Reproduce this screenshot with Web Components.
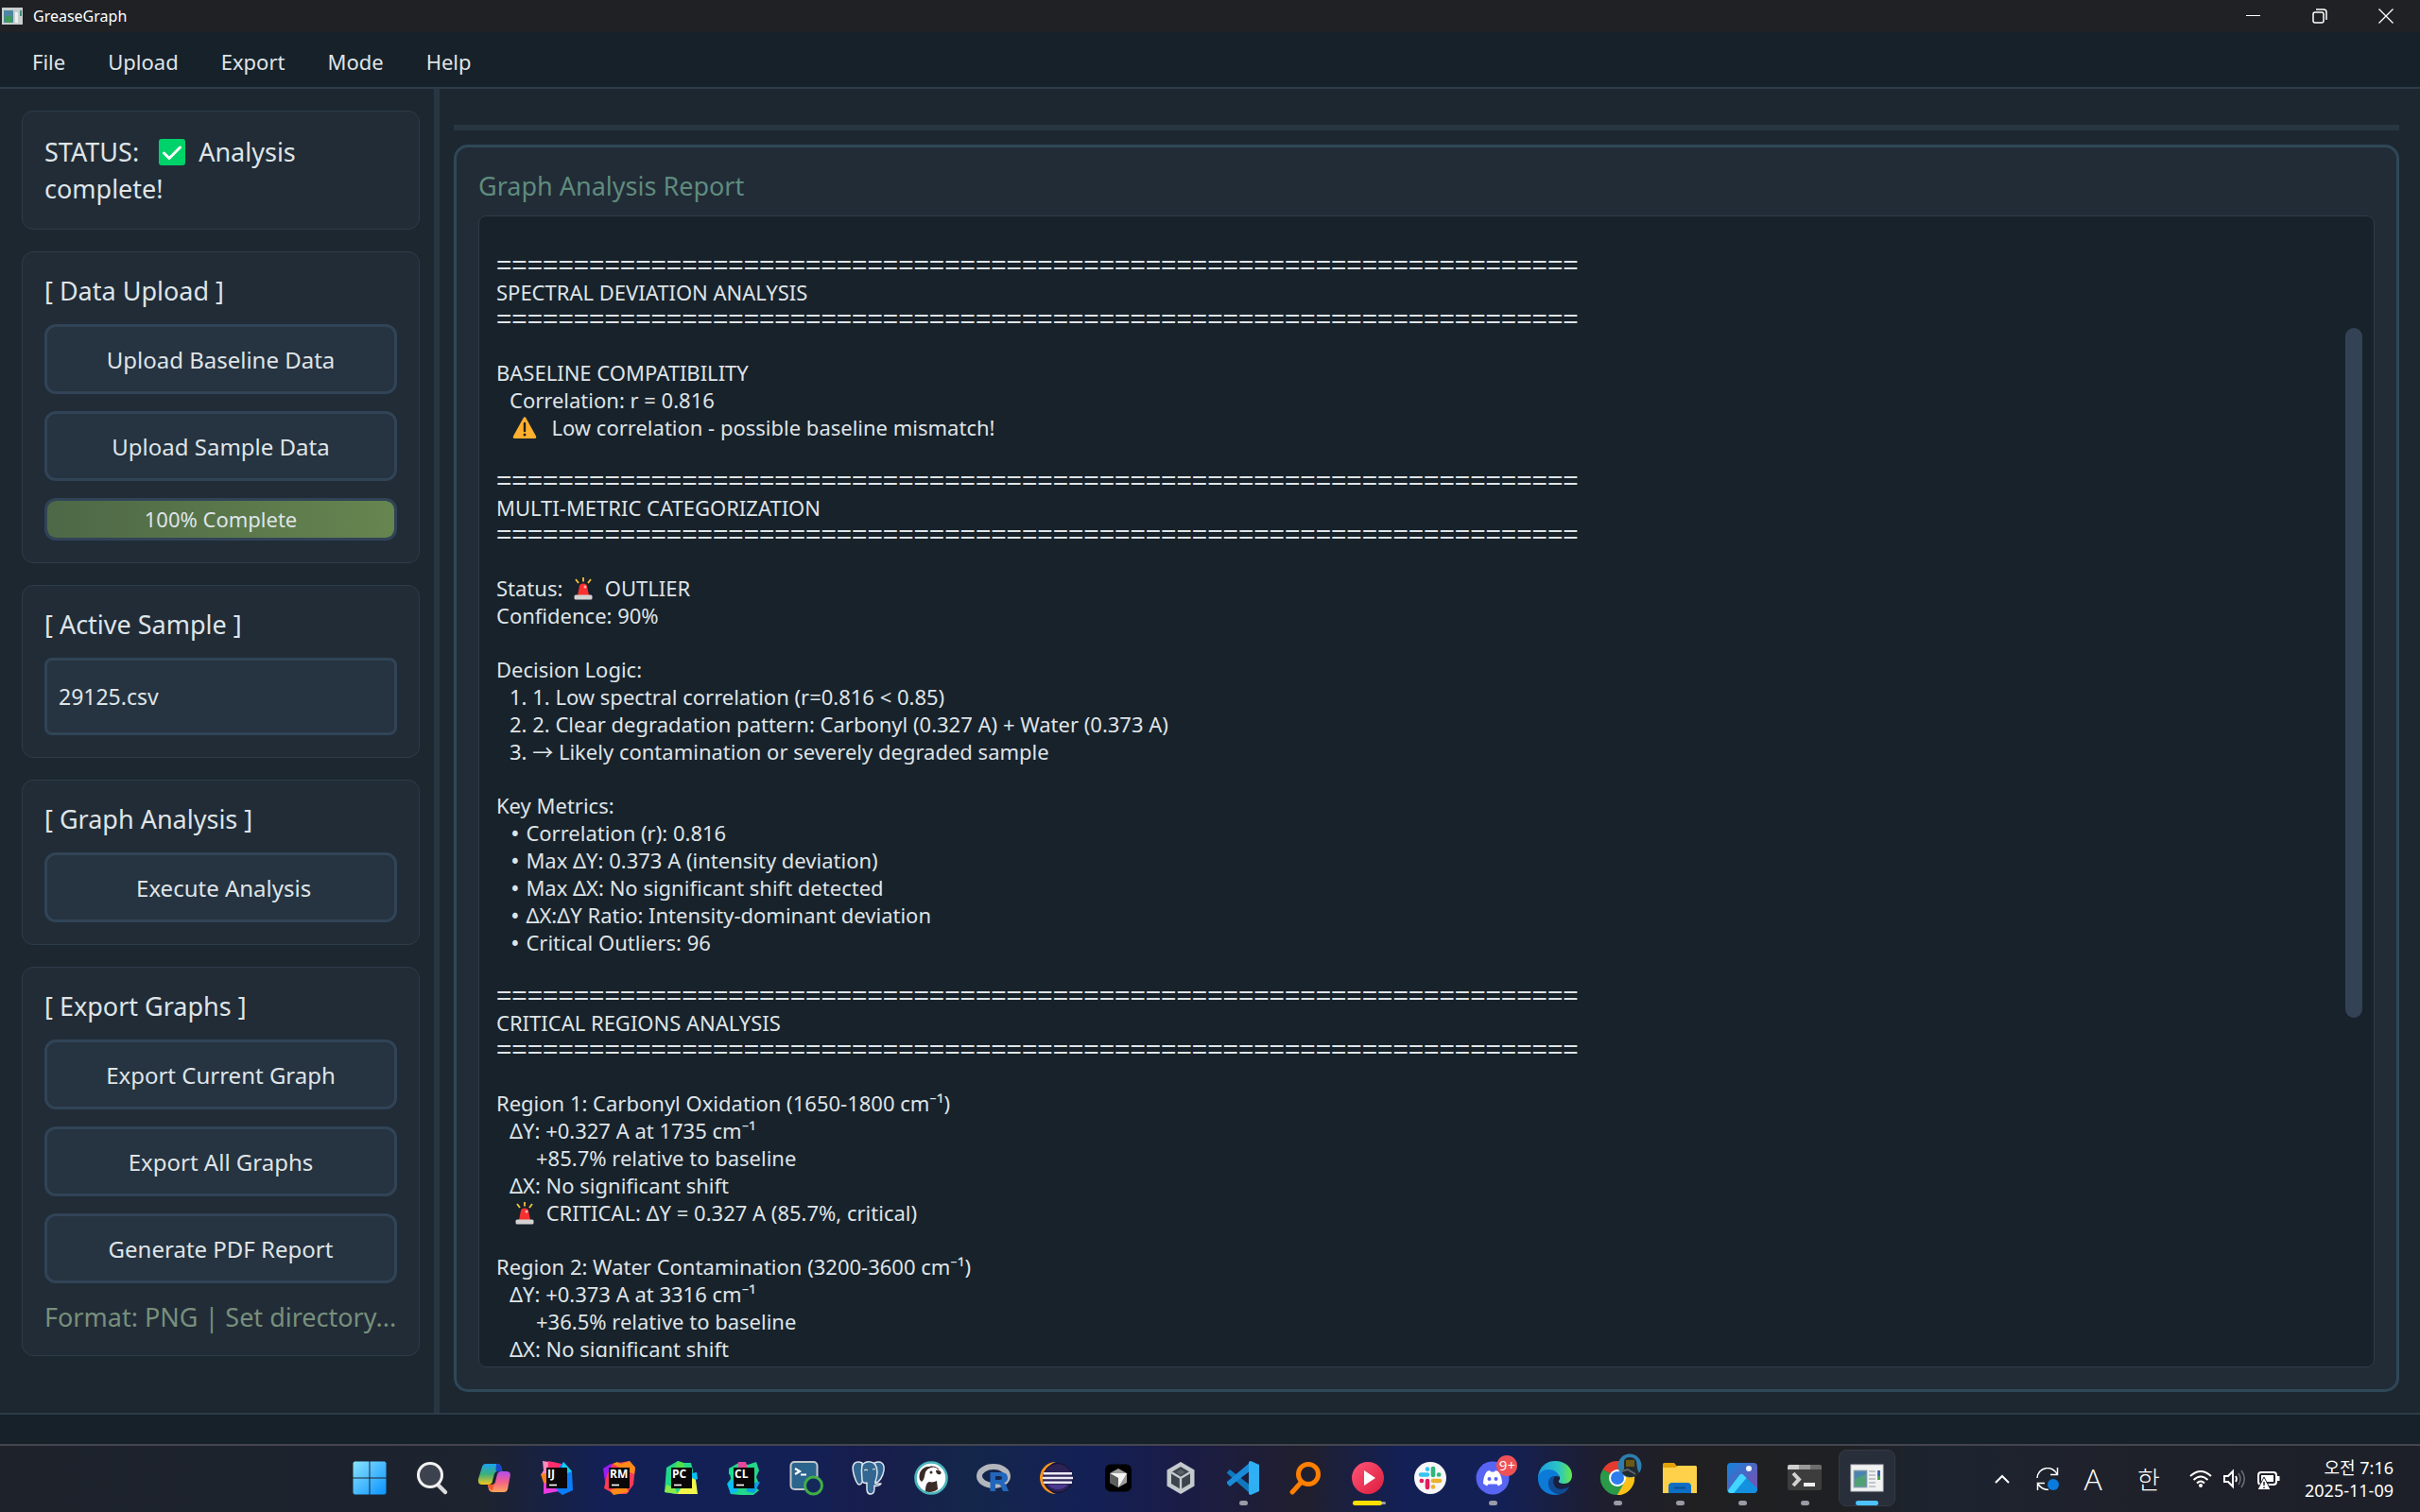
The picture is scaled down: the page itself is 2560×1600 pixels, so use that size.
<!DOCTYPE html>
<html lang="en">
<head>
<meta charset="utf-8">
<title>GreaseGraph</title>
<style>
html, body { height: 100%; margin: 0; }
body {
  font-family: "Noto Sans", "Open Sans", "Noto Sans CJK KR", sans-serif;
  font-size: 22px;
  color: #dfe4e7;
  background: #1d2730;
  --ink: #dfe4e7;
  --line: #2d3c49;
  --bar: #283642;
  --deep: #18222b;
  --card: #212c37;
  --control: #263340;
  --control-line: #314457;
}
</style>
</head>
<body>
<app-window>
  <title-bar slot="title">GreaseGraph</title-bar>
  <menu-bar slot="menu" items="File,Upload,Export,Mode,Help"></menu-bar>

  <side-card slot="side"><status-line state="Analysis complete!"></status-line></side-card>
  <side-card slot="side" heading="[ Data Upload ]">
    <action-button>Upload Baseline Data</action-button>
    <action-button>Upload Sample Data</action-button>
    <progress-strip value="100"></progress-strip>
  </side-card>
  <side-card slot="side" heading="[ Active Sample ]">
    <sample-field value="29125.csv"></sample-field>
  </side-card>
  <side-card slot="side" heading="[ Graph Analysis ]">
    <action-button>&nbsp;Execute Analysis</action-button>
  </side-card>
  <side-card slot="side" heading="[ Export Graphs ]">
    <action-button>Export Current Graph</action-button>
    <action-button>Export All Graphs</action-button>
    <action-button>Generate PDF Report</action-button>
    <format-note>Format: PNG | Set directory...</format-note>
  </side-card>

  <report-panel slot="main" heading="Graph Analysis Report"></report-panel>
</app-window>
<task-bar></task-bar>

<script>
// Small base class: every element renders one template into an open root
class Base extends HTMLElement {
  constructor() {
    super();
    this.attachShadow({ mode: "open" });
  }
  connectedCallback() {
    this.shadowRoot.innerHTML = `<style>:host,*{box-sizing:border-box}${this.css()}</style>${this.html()}`;
  }
  css() { return ""; }
  html() { return "<slot></slot>"; }
}

// -- Window frame --

class AppWindow extends Base {
  css() {
    return `
:host { display: flex; flex-direction: column; height: calc(100vh - 72px); }
.work { flex: 1; min-height: 0; display: flex; }
.side {
  flex: 0 0 459px; display: flex; flex-direction: column; gap: 23px;
  padding: 23px 15px 23px 23px; overflow: hidden;
}
.split { flex: 0 0 6px; background: var(--bar); }
main { flex: 1; min-width: 0; display: flex; flex-direction: column; gap: 15px; padding: 38px 22px 22px 15px; }
.rail { flex: 0 0 6px; background: var(--bar); }
footer { flex: 0 0 33px; background: #17212a; border-top: 2px solid var(--line); }`;
  }
  html() {
    return `
<slot name="title"></slot>
<slot name="menu"></slot>
<div class="work">
  <aside class="side"><slot name="side"></slot></aside>
  <div class="split"></div>
  <main><div class="rail"></div><slot name="main"></slot></main>
</div>
<footer></footer>`;
  }
}

class TitleBar extends Base {
  css() {
    return `
:host {
  display: flex; align-items: stretch; flex: 0 0 34px; padding-right: 1px;
  background: #202124; color: #fff; font-size: 16px; line-height: 34px;
}
.app { width: 22px; margin: 0 11px 0 2px; align-self: center; height: 18px; }
.name { flex: 1; }
button { width: 70px; border: 0; padding: 0; background: none; display: grid; place-items: center; }
button svg { width: 16px; height: 16px; fill: none; stroke: #fff; }`;
  }
  html() {
    return `
<svg class="app" viewBox="0 0 22 18"><rect width="22" height="18" fill="#c9cfcf"/><rect x="2" y="3" width="10" height="13" fill="#4d86a0"/><rect x="3" y="9" width="8" height="7" fill="#3d9a58"/><path d="M14 5h3v11h-3z" fill="#eef0f0"/><path d="M19 3h2v6h-2z" fill="#3f8c86"/></svg>
<span class="name"><slot></slot></span>
<button aria-label="Minimize"><svg viewBox="0 0 16 16"><path d="M0 7.5h15"/></svg></button>
<button aria-label="Restore"><svg viewBox="0 0 16 16"><rect x="1" y="4" width="11" height="11" rx="2" stroke-width="1.5"/><path d="M4 1h8a3 3 0 0 1 3 3v8" stroke-width="1.5"/></svg></button>
<button aria-label="Close"><svg viewBox="0 0 16 16"><path d="M.5 .5l15 15M15.5 .5l-15 15" stroke-width="1.3"/></svg></button>`;
  }
}

class MenuBar extends Base {
  css() {
    return `
:host { display: block; flex: 0 0 60px; background: #17212a; border-bottom: 2px solid var(--line); }
nav { display: flex; gap: 1px; height: 100%; padding-left: 12px; }
button { border: 0; background: none; padding: 4px 22px 0; font: inherit; color: var(--ink); }`;
  }
  html() {
    const items = this.getAttribute("items").split(",");
    return `<nav>${items.map((t) => `<button>${t}</button>`).join("")}</nav>`;
  }
}

// -- Sidebar --

class SideCard extends Base {
  css() {
    return `
:host {
  display: flex; flex-direction: column; gap: 18px; flex: none; padding: 23px;
  background: var(--card); border: 1px solid var(--line); border-radius: 12px;
}
h2 { margin: 0; font-size: 27px; line-height: 35px; font-weight: 400; white-space: nowrap; }`;
  }
  html() {
    const h = this.getAttribute("heading");
    return `${h ? `<h2>${h}</h2>` : ""}<slot></slot>`;
  }
}

class StatusLine extends Base {
  css() {
    return `
:host { display: block; font-size: 27px; line-height: 39px; padding-right: 60px; }
svg { width: 28px; height: 28px; margin: 0 14px; vertical-align: -4px; }`;
  }
  html() {
    return `STATUS: <svg viewBox="0 0 28 28"><rect width="28" height="28" rx="3" fill="#00d26a"/><path d="M5.500 15l5.500 5.500L22.500 9" fill="none" stroke="#fff" stroke-width="3" stroke-linecap="round" stroke-linejoin="round"/></svg>${this.getAttribute("state")}`;
  }
}

class ActionButton extends Base {
  css() {
    return `
:host { display: block; }
button {
  display: block; width: 100%; height: 74px; font: inherit; font-size: 24px; color: var(--ink);
  background: var(--control); border: 3px solid var(--control-line); border-radius: 12px;
}`;
  }
  html() { return "<button><slot></slot></button>"; }
}

class ProgressStrip extends Base {
  css() {
    return `
:host {
  display: block; height: 45px; border: 3px solid var(--control-line); border-radius: 12px;
  background: var(--control); overflow: hidden;
}
.fill {
  height: 100%; border-radius: 8px; text-align: center; line-height: 39px;
  background: linear-gradient(90deg, #4d6847, #66854f);
}`;
  }
  html() {
    const v = this.getAttribute("value");
    return `<div class="fill" role="progressbar" aria-valuenow="${v}" style="width:${v}%">${v}% Complete</div>`;
  }
}

class SampleField extends Base {
  css() {
    return `
:host { display: block; }
input {
  display: block; width: 100%; height: 82px; padding: 0 12px; font: inherit; font-size: 23px; color: var(--ink);
  background: var(--control); border: 3px solid var(--control-line); border-radius: 8px;
}`;
  }
  html() { return `<input aria-label="Active sample" readonly value="${this.getAttribute("value")}">`; }
}

class FormatNote extends Base {
  css() { return ":host { display: block; font-size: 27px; line-height: 35px; color: #788f7b; white-space: nowrap; }"; }
}

// -- Report --

const RULE = "=".repeat(70);

// [kind, text]; a number as kind is the indent level
const REPORT = [
  ["gap"],
  ["rule"], [0, "SPECTRAL DEVIATION ANALYSIS"], ["rule"],
  ["gap"],
  [0, "BASELINE COMPATIBILITY"],
  [1, "Correlation: r = 0.816"],
  [1, "{warn}  Low correlation - possible baseline mismatch!"],
  ["gap"],
  ["rule"], [0, "MULTI-METRIC CATEGORIZATION"], ["rule"],
  ["gap"],
  [0, "Status: {siren} OUTLIER"],
  [0, "Confidence: 90%"],
  ["gap"],
  [0, "Decision Logic:"],
  [1, "1. 1. Low spectral correlation (r=0.816 &lt; 0.85)"],
  [1, "2. 2. Clear degradation pattern: Carbonyl (0.327 A) + Water (0.373 A)"],
  [1, "3. → Likely contamination or severely degraded sample"],
  ["gap"],
  [0, "Key Metrics:"],
  [1, "{dot} Correlation (r): 0.816"],
  [1, "{dot} Max ΔY: 0.373 A (intensity deviation)"],
  [1, "{dot} Max ΔX: No significant shift detected"],
  [1, "{dot} ΔX:ΔY Ratio: Intensity-dominant deviation"],
  [1, "{dot} Critical Outliers: 96"],
  ["gap"],
  ["rule"], [0, "CRITICAL REGIONS ANALYSIS"], ["rule"],
  ["gap"],
  [0, "Region 1: Carbonyl Oxidation (1650-1800 cm⁻¹)"],
  [1, "ΔY: +0.327 A at 1735 cm⁻¹"],
  [3, "+85.7% relative to baseline"],
  [1, "ΔX: No significant shift"],
  [1, "{siren} CRITICAL: ΔY = 0.327 A (85.7%, critical)"],
  ["gap"],
  [0, "Region 2: Water Contamination (3200-3600 cm⁻¹)"],
  [1, "ΔY: +0.373 A at 3316 cm⁻¹"],
  [3, "+36.5% relative to baseline"],
  [1, "ΔX: No significant shift"],
];

const MARKS = {
  warn: `<svg viewBox="0 0 30 24"><path d="M13.500 1.500q1.500-2.500 3 0L27 20.500q1 2.500-1.500 2.500h-21Q2 23 3 20.500z" fill="#ffb02e"/><path d="M15 7v8" stroke="#212121" stroke-width="2.400" stroke-linecap="round"/><circle cx="15" cy="19" r="1.500" fill="#212121"/></svg>`,
  siren: `<svg viewBox="0 0 30 24"><path d="M15 0v4.500M7 2l3 4M23 2l-3 4" stroke="#f9c23c" stroke-width="1.800"/><path d="M9 19l2-10q.4-2.500 4-2.500t4 2.500l2 10z" fill="#f8312f"/><circle cx="17" cy="10" r="1.500" fill="#ffb3b0"/><rect x="5.500" y="18.500" width="19" height="5" rx="1.500" fill="#d3d3d3"/></svg>`,
  dot: `<span class="dot">•</span>`,
};

class ReportPanel extends Base {
  css() {
    return `
:host {
  flex: 1; min-height: 0; display: flex; flex-direction: column; gap: 14px; padding: 23px;
  background: var(--card); border: 3px solid #2f4858; border-radius: 15px;
}
h1 { margin: 0; font-size: 27px; line-height: 35px; font-weight: 400; color: #5f8b7d; }
.box {
  flex: 1; min-height: 0; display: flex; padding: 10px 12px 10px 18px;
  background: var(--deep); border: 1px solid var(--line); border-radius: 8px;
}
.text { flex: 1; min-width: 0; overflow: hidden; white-space: pre; }
.text div { height: 29px; line-height: 29px; }
.text .gap { height: 28px; }
.text .rule { height: 28px; line-height: 28px; font-family: "Liberation Sans", sans-serif; font-size: 28px; }
.in1 { padding-left: 14px; }
.in3 { padding-left: 42px; }
.dot { font-family: "DejaVu Sans Condensed", "DejaVu Sans", sans-serif; }
svg { width: 30px; height: 24px; margin: 0 2px 0 1px; vertical-align: -4px; }
.track { flex: 0 0 18px; display: flex; flex-direction: column; }
.thumb { flex: 61; border-radius: 9px; background: #334355; }
.before { flex: 9; }
.after { flex: 30; }`;
  }
  line([kind, text]) {
    if (kind === "gap") return `<div class="gap"></div>`;
    if (kind === "rule") return `<div class="rule">${RULE}</div>`;
    return `<div class="in${kind}">${text.replace(/\{(\w+)\}/g, (_, m) => MARKS[m])}</div>`;
  }
  html() {
    return `<h1>${this.getAttribute("heading")}</h1>
<div class="box"><div class="text">${REPORT.map((l) => this.line(l)).join("")}</div>
<div class="track"><div class="before"></div><div class="thumb"></div><div class="after"></div></div></div>`;
  }
}

// -- Taskbar --

// JetBrains tiles share the black plate and the underscore
const plate = (t) => `<rect x="7" y="7" width="22" height="22" fill="#0b0708"/><text x="8" y="18" font-family="Open Sans" font-weight="700" font-size="12" fill="#fff">${t}</text><path d="M10 25.500h8" stroke="#fff" stroke-width="1.600"/>`;

const ICONS = {
  start: `<defs><linearGradient id="g" x1="0" y1="0" x2="1" y2="1"><stop stop-color="#8ae3ff"/><stop offset="1" stop-color="#0a93ff"/></linearGradient></defs><path d="M2 .5h15.500v17H.5V2zM18.500.5H34l1.500 1.500v15.500h-17zM.5 18.500h17v17H2L.5 34zM18.500 18.500h17V34L34 35.500H18.500z" fill="url(#g)"/>`,
  search: `<path d="M24 25l8 8" stroke="#dadbdd" stroke-width="4.500" stroke-linecap="round"/><circle cx="16" cy="15" r="12.500" fill="#3d434e" stroke="#f2f2f2" stroke-width="3"/>`,
  copilot: `<defs><linearGradient id="a" x1="0" y1="0" x2="0" y2="1"><stop stop-color="#1ba2f0"/><stop offset=".5" stop-color="#3bb07a"/><stop offset="1" stop-color="#f4c71f"/></linearGradient><linearGradient id="b" x1="0" y1="0" x2="0" y2="1"><stop stop-color="#b04df0"/><stop offset=".5" stop-color="#f4608a"/><stop offset="1" stop-color="#fba659"/></linearGradient></defs><path d="M9 3h12q3 0 4 3l1.500 5h-5q-3 0-4 4l-2 8q-1 2-4 2H5q-5 0-4-6L5 6q1-3 4-3z" fill="url(#a)"/><path d="M20 3q4 0 5 3l1.500 5H22q-3 0-2.500-2z" fill="#1747c9"/><path d="M28 33H17q-4 0-5-3l-1-4h4q3 0 4-4l2-8q1-3 4-3h6q5 0 3.500 6L32 30q-1 3-4 3z" fill="url(#b)"/><path d="M11 25h4q2 0 3-2l-2 8q-4-.5-5-6z" fill="#ef5a2c"/>`,
  idea: `<path d="M3 0l13 2 8 12-12 6L1 15l3-5z" fill="#fd8bc0"/><path d="M9 0l14 3v12H8z" fill="#ff2d6b"/><path d="M1 14l10-2 2 12-8 2z" fill="#fc801d"/><path d="M21 6l4-5 9 10 1 20-11 5-8-6z" fill="#0b7dfb"/><path d="M25 1l9 10-5 2-6-6z" fill="#10d0f0"/><path d="M4 23l12 5 4 4-16 3z" fill="#e83be0"/>` + plate("IJ"),
  mine: `<path d="M1 8l8-5 12 2-9 16L4 29z" fill="#9a1cf2"/><path d="M11 3l18-3 6 7-2 18-7 10-13 0L2 29l3-14z" fill="#ff3a55"/><path d="M11 3l5-2 4 2 9-3 6 7-1 7-12-5z" fill="#ff8a18"/><path d="M8 31l16-5 4 7-16 3z" fill="#ff8a18"/>` + plate("RM"),
  charm: `<path d="M2 7l12-7 6 2 8 0 2 8-2 15-16 10L0 33z" fill="#21d789"/><path d="M14 0l6 2 3 8H9z" fill="#50e04d"/><path d="M28 13l6-1 1 7-7 3z" fill="#07c3f2"/><path d="M18 28l11-10 4 2 2 15-22 0z" fill="#f0f64a"/><path d="M0 33l2-8 9 4 3 6z" fill="#8bea4a"/>` + plate("PC"),
  clion: `<path d="M2 8l12-7 8 3 9-3 3 9-3 7 3 7-6 2 6 5-6 5H14L4 35 1 23l3-4z" fill="#21d789"/><path d="M12 1l8 0 2 7H12z" fill="#e6479a"/><path d="M0 24l7-5 5 13-8 3z" fill="#0bbdf2"/><path d="M24 24l11-2-6 12-9-2z" fill="#0a9ee5"/><path d="M2 10l5-3v9l-5-2z" fill="#13e38c"/>` + plate("CL"),
  terminal: `<rect x="1.500" y="1" width="28" height="29" rx="4" fill="#2b648c" stroke="#c3c7cb" stroke-width="2"/><path d="M6 8l5 3-5 3" fill="none" stroke="#fff" stroke-width="2.200"/><path d="M12 14.500h6" stroke="#fff" stroke-width="2"/><circle cx="25.500" cy="26" r="9" fill="#14285a" stroke="#3fae49" stroke-width="3"/>`,
  postgres: `<g fill="#336791" stroke="#dfe6ee" stroke-width="1.500" stroke-linejoin="round"><path d="M11 2C4-1 0 3 1.500 11c1 6 4 14 6.500 14s3-3 4-4zM24 2c7-3 11 1 10 8s-5 12-8 13l-4-3z"/><path d="M12 3c4-3 10-3 13 1 3 5 2 12 0 18-1 3 3 2 6 2-1 2-5 3-7 2 0 5 0 9-4 9-5 0-4-6-4-12-2 1-5 0-5-3 0-5-2-13 1-17z"/></g><path d="M13 10q2-2 4 0M22 9q2-1 3 0" stroke="#fff" fill="none"/>`,
  beaver: `<circle cx="18" cy="18" r="16.500" fill="#fff" stroke="#4ab5bb" stroke-width="2.600"/><path d="M6 20c-2-7 2-13 8-14l7 0c-4 1-8 3-9 6-1 3-1 8-4 10zM12 32c0-5 1-9 4-10 3 1 6 0 8-1l1 9c-4 3-9 4-13 2zM23 10c4-1 7 2 5 4-3 1-5-1-5-4z" fill="#3a2b27"/><circle cx="18" cy="12" r="1.500" fill="#3a2b27"/><path d="M14 7q7-3 12 2" fill="none" stroke="#3a2b27"/>`,
  rlang: `<ellipse cx="18" cy="16" rx="15" ry="10" fill="none" stroke="#b3b6bc" stroke-width="6"/><path fill-rule="evenodd" d="M14.500 32V12H26q7 0 7 6 0 4-4 5 2 1 3 4l2 5h-6l-2.500-6q-.7-1.500-2.500-1.500h-3V32zM20 20h4.500q2.500 0 2.500-2t-2.500-2H20z" fill="#2267bb"/>`,
  eclipse: `<path d="M18 1A17 17 0 0 0 18 35 18 18 0 0 1 18 1z" fill="#f7941e"/><circle cx="20" cy="18" r="15.500" fill="#2c2255" stroke="#151033"/><path d="M5 12h30v2.500H5zM4 16.800h32v2.500H4zM5 21.500h30V24H5z" fill="#eceaf6"/><path d="M9 25h22q-5 5-11 5T9 25z" fill="#4b3a90"/>`,
  cursor: `<rect x="4" y="3.500" width="28" height="29" rx="6" fill="#000"/><path d="M18 8l9 5v10l-9 5-9-5V13z" fill="#9d9d9d"/><path d="M9 13h18l-9 15V18z" fill="#f3f3f3"/><path d="M9 13l9 5v10l-9-5z" fill="#5e5e5e"/>`,
  unity: `<path d="M18 1l14.500 8.500v17L18 35 3.500 26.500v-17z" fill="#c5cace"/><path d="M18 6l10 6v12l-10 6-10-6V12z" fill="#3d454c"/><path d="M18 18v12M18 18L8 12M18 18l10-6" stroke="#c5cace" stroke-width="2.400"/><path d="M18 9l5 3-5 3-5-3z" fill="#596068"/>`,
  code: `<path d="M1 12l3-3 22 17v9L1 13z" fill="#0f77bd"/><path d="M1 24l3 3L26 10V1L1 22z" fill="#1a8bd8"/><path d="M26 0l9 4v28l-9 4-2-1V1z" fill="#2fb0f5"/>`,
  loupe: `<circle cx="21" cy="14" r="10.500" fill="none" stroke="#ff7f00" stroke-width="5"/><path d="M14 22L4 33" stroke="#ff7f00" stroke-width="5" stroke-linecap="round"/>`,
  play: `<defs><linearGradient id="p" x1="0" y1="0" x2="1" y2="1"><stop stop-color="#ff5578"/><stop offset="1" stop-color="#dc1c3c"/></linearGradient></defs><circle cx="18" cy="18" r="17" fill="url(#p)"/><path d="M14 10l12 8-12 8z" fill="#fff"/>`,
  slack: `<circle cx="18" cy="18" r="17" fill="#f7f7f8"/><g stroke-width="4.600" stroke-linecap="round"><path d="M8 14.500h7M15 8.500v.2" stroke="#36c5f0"/><path d="M21 8v7M27 14.500h.2" stroke="#2eb67d"/><path d="M28 21h-7M21 27.500v-.2" stroke="#ecb22e"/><path d="M15 28v-7M9 21h-.2" stroke="#e01e5a"/></g>`,
  discord: `<circle cx="18" cy="18" r="17.500" fill="#5865f2"/><path d="M12 11l3-1 1 1.500h4L21 10l3 1c3 4 4 8 4 13l-4 2.500-1.500-2h-9l-1.500 2L8 24c0-5 1-9 4-13z" fill="#fff"/><circle cx="14.500" cy="19" r="2" fill="#5865f2"/><circle cx="21.500" cy="19" r="2" fill="#5865f2"/>`,
  edge: `<defs><linearGradient id="e" x1="0" y1="0" x2="1" y2="0"><stop stop-color="#1b9de2"/><stop offset=".6" stop-color="#2cc4c4"/><stop offset="1" stop-color="#66e84a"/></linearGradient></defs><path d="M0 17C1 6 9 0 18 0c11 0 18 7 18 15 0 6-4 9-8 9s-7-1-6-3c3-3 0-8-5-8-7 0-12 2-17 4z" fill="url(#e)"/><path d="M0 17c1-5 6-8 11-8 6 0 11 3 11 8-5-3-10 1-10 7s5 11 12 11c-14 4-25-6-24-18z" fill="#0c7bd8"/><path d="M12 19c-4 8 3 17 12 16 5-1 8-5 9-8-6 4-14 4-16-2-2-4 0-7 1-9-3 0-5 1-6 3z" fill="#114a94"/>`,
  chrome: `<path d="M18 18L2.400 9A18 18 0 0 1 33.600 9z" fill="#e33b2e"/><path d="M18 18L33.600 9A18 18 0 0 1 18 36z" fill="#fbc116"/><path d="M18 18v18A18 18 0 0 1 2.400 9z" fill="#2a9a48"/><path d="M2.400 9L14 26l4 10 8-14z" fill="#2a9a48"/><path d="M33.600 9H18l8 13-8 14c10 0 18-8 18-18z" fill="#fbc116"/><circle cx="18" cy="18" r="9" fill="#fff"/><circle cx="18" cy="18" r="7" fill="#2f7cf0"/>`,
  files: `<path d="M0 3.500Q0 2 1.500 2H12l3 3.500h19.500Q36 5.500 36 7v10H0z" fill="#e3a008"/><path d="M0 7h13l3-2h18.500Q36 5 36 6.500V34H0z" fill="#ffd14a"/><path d="M6 34v-7q0-4 4-4h16q4 0 4 4v7z" fill="#0d6fc4"/><path d="M12 28.500h12" stroke="#0a4e94" stroke-width="2"/>`,
  photos: `<defs><linearGradient id="h" x1="0" y1="0" x2="1" y2="1"><stop stop-color="#1184dc"/><stop offset=".7" stop-color="#6759b8"/></linearGradient></defs><rect x="2" y="2" width="32" height="32" rx="4" fill="url(#h)"/><path d="M3 31l12-16q2-2.500 4.500 0L34 29q0 5-4 5H6q-3 0-3-3z" fill="#1390e0"/><path d="M3 31l12-16q2-2.500 4.500 0l3 3L9 34H6q-3 0-3-3z" fill="#41d5ff"/><circle cx="25" cy="8" r="3" fill="#eef6ff"/>`,
  console: `<rect y="4" width="36" height="27" rx="2" fill="#3d3d3d"/><path d="M0 9V6q0-2 2-2h10v5z" fill="#cfcfcf"/><path d="M12 4h12v5H12z" fill="#9a9a9a"/><path d="M24 4h10q2 0 2 2v3H24z" fill="#6d6d6d"/><path d="M6 13l6 6.500L6 26" fill="none" stroke="#d2d2d2" stroke-width="4"/><path d="M17 25h12" stroke="#f0f0f0" stroke-width="4"/>`,
  grease: `<rect x="1" y="4" width="34" height="28" fill="#f1f2f2" stroke="#c4c8ca"/><rect x="4" y="10" width="14" height="18" fill="#4c84b0" stroke="#a7adb2"/><path d="M5 19l12-5v13H5z" fill="#4fa174"/><path d="M20 11h7M20 15h7M20 19h7M20 23h7M20 27h7" stroke="#c3c6c8" stroke-width="2"/><path d="M29 10h3v6h-3z" fill="#3c68ad"/><path d="M29 16h3v4h-3z" fill="#47a356"/>`,
};

// name, then the mark under the icon
const TASKS = [
  ["start"], ["search"], ["copilot"], ["idea"], ["mine"], ["charm"], ["clion"], ["terminal"], ["postgres"],
  ["beaver"], ["rlang"], ["eclipse"], ["cursor"], ["unity"], ["code", "run"], ["loupe"], ["play", "alert"],
  ["slack"], ["discord", "run"], ["edge"], ["chrome", "run"], ["files", "run"], ["photos", "run"],
  ["console", "run"], ["grease", "active"],
];

class TaskButton extends Base {
  css() {
    return `
:host { display: block; width: 66px; height: 70px; }
button {
  position: relative; display: grid; place-items: center; width: 60px; height: 60px; margin: 4px 3px; padding: 0;
  border: 1px solid transparent; border-radius: 8px; background: none;
}
svg { width: 36px; height: 36px; overflow: visible; }
i { position: absolute; bottom: 0; left: 50%; height: 5px; width: 9px; margin-left: -4px; border-radius: 3px; background: #999ba6; }
.alert i { width: 31px; margin-left: -16px; background: #ffe000; box-shadow: 5px 0 0 -1px #999ba6; }
.active { background: #292f3a; border-color: #343a44; }
.active i { width: 24px; margin-left: -12px; background: #4cc2ff; }
b {
  position: absolute; top: 5px; right: 3px; width: 22px; height: 22px; border-radius: 50%;
  font: 15px/21px "Open Sans", sans-serif; color: #fff; background: #ee5257; text-align: center;
}
.face { position: absolute; top: 3px; right: 3px; width: 26px; height: 26px; }`;
  }
  html() {
    const name = this.getAttribute("name");
    const mark = this.getAttribute("mark") || "";
    let extra = mark ? "<i></i>" : "";
    if (name === "discord") extra += "<b>9+</b>";
    if (name === "chrome") extra += `<svg class="face" viewBox="0 0 26 26"><circle cx="13" cy="13" r="12.500" fill="#2d7fae"/><path d="M7 8q1-4 6-4t7 4l1 8 2 5q-9 8-18 0l2-5z" fill="#22292f"/><rect x="9" y="7" width="9" height="7" fill="#6d5a12"/><path d="M4 19l7-2 8 5" stroke="#59656e" stroke-width="2" fill="none"/></svg>`;
    return `<button class="${mark}" aria-label="${name}"><svg viewBox="0 0 36 36">${ICONS[name]}</svg>${extra}</button>`;
  }
}

class SystemTray extends Base {
  css() {
    return `
:host { display: flex; align-items: center; color: #fff; padding-right: 28px; }
svg { display: block; height: 24px; fill: none; stroke: #fff; stroke-width: 1.500; }
.up { width: 16px; margin-right: 28px; }
.sync { width: 24px; margin-right: 26px; }
.latin { width: 20px; margin-right: 36px; text-align: center; font: 300 32px/40px "Open Sans", sans-serif; }
.hangul { width: 26px; margin-right: 30px; text-align: center; font: 300 26px/40px "Noto Sans CJK KR", sans-serif; }
.wifi, .sound, .power { width: 24px; margin-right: 12px; }
time { display: block; width: 108px; text-align: right; font-size: 18px; line-height: 24px; }`;
  }
  html() {
    return `
<svg class="up" viewBox="0 0 16 24"><path d="M1 16l7-7 7 7" stroke-width="2"/></svg>
<svg class="sync" viewBox="0 0 24 24"><path d="M1 11a11 11 0 0 1 21-4M22.500 0v7.500H15M13 23.500q-7 0-11-6M1.500 24v-7.500H9"/><circle cx="18" cy="18" r="6" fill="#0a7bdc" stroke="none"/></svg>
<span class="latin">A</span>
<span class="hangul">한</span>
<svg class="wifi" viewBox="0 0 24 24"><path d="M1 9q11-10 22 0M4.500 13q7.500-7 15 0M8 16.500q4-4 8 0" stroke-width="2"/><circle cx="12" cy="19" r="2" fill="#fff" stroke="none"/></svg>
<svg class="sound" viewBox="0 0 24 24"><path d="M1 9h4l5-5v16l-5-5H1z" stroke-width="2"/><path d="M13 9q2 3 0 6" stroke-width="1.800"/><path d="M16 6q4 6 0 12M19 3q6.500 9 0 18" stroke="#6b6f77"/></svg>
<svg class="power" viewBox="0 0 24 24"><rect x="1" y="5" width="19" height="13" rx="3" stroke-width="2"/><rect x="4" y="8" width="13" height="7" fill="#fff" stroke="none"/><path d="M22 9v5" stroke-width="3"/><path d="M7 10l7 13.500H0z" fill="#fff" stroke="#1f222a" stroke-width="1"/><path d="M7 15v4M7 20.500v1.500" stroke="#1f222a"/></svg>
<time datetime="2025-11-09T07:16">오전 7:16<br>2025-11-09</time>`;
  }
}

class TaskBar extends Base {
  css() {
    return `
:host {
  display: flex; justify-content: space-between; height: 72px; padding-left: 14%; border-top: 2px solid #44454f;
  background: linear-gradient(90deg, #1d222b 0, #1d232f 20%, #132056 25%, #132056 33%, #181d4c 36%, #14264a 40%,
    #132056 45%, #1b1c45 49%, #201f2e 54%, #132056 58%, #132056 62%, #1e1e30 66%, #202022 70%, #1f2023 76%, #1d2430 80%, #1f212a 88%, #1d2028 100%);
}
nav { display: flex; }`;
  }
  html() {
    return `<nav>${TASKS.map(([n, m]) => `<task-button name="${n}"${m ? ` mark="${m}"` : ""}></task-button>`).join("")}</nav><system-tray></system-tray>`;
  }
}

customElements.define("app-window", AppWindow);
customElements.define("title-bar", TitleBar);
customElements.define("menu-bar", MenuBar);
customElements.define("side-card", SideCard);
customElements.define("status-line", StatusLine);
customElements.define("action-button", ActionButton);
customElements.define("progress-strip", ProgressStrip);
customElements.define("sample-field", SampleField);
customElements.define("format-note", FormatNote);
customElements.define("report-panel", ReportPanel);
customElements.define("task-button", TaskButton);
customElements.define("system-tray", SystemTray);
customElements.define("task-bar", TaskBar);
</script>
</body>
</html>
